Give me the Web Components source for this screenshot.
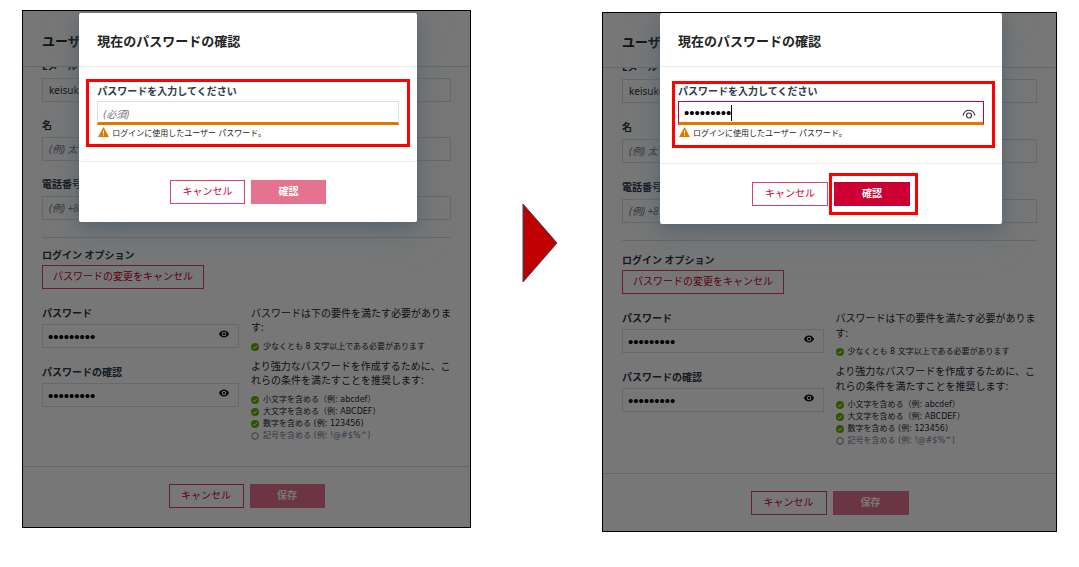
<!DOCTYPE html>
<html lang="ja">
<head>
<meta charset="utf-8">
<title>現在のパスワードの確認</title>
<style>
body { margin: 0; background: #fff; font-family: "Noto Sans", "Noto Sans CJK JP", sans-serif; font-size: 10px; color: #1f2a33; }
</style>
</head>
<body>
<password-steps></password-steps>
<script>
const define = (name, html, setup) => {
  const template = document.createElement('template');
  template.innerHTML = '<style>*{box-sizing:border-box}</style>' + html;
  customElements.define(name, class extends HTMLElement {
    constructor() {
      super();
      this.attachShadow({ mode: 'open' }).append(template.content.cloneNode(true));
    }
    connectedCallback() { if (setup) setup(this, this.shadowRoot); }
  });
};

define('ui-button', `
<style>
:host { display: inline-block; }
button { display: block; width: 100%; min-width: var(--button-width, 75px); height: 24px; padding: 0 10px 2px; margin: 0; border: 1px solid #d9436a; border-radius: 0; background: #fff; color: #cc0033; font: inherit; line-height: 20px; white-space: nowrap; }
:host([kind="primary"]) button { background: #cc0033; border-color: #cc0033; color: #fff; font-weight: 700; }
:host([kind="muted"]) button { background: #e5738f; border-color: #e5738f; color: #fff; font-weight: 700; }
</style>
<button type="button"><slot></slot></button>`);

define('eye-icon', `
<style>
:host { display: block; width: 10px; height: 8px; color: #10161b; }
:host([outline]) { width: 14px; height: 10px; color: #333; }
svg { display: none; width: 100%; height: 100%; }
:host(:not([outline])) .solid, :host([outline]) .line { display: block; }
</style>
<svg class="solid" viewBox="0 0 20 16"><path fill="currentColor" fill-rule="evenodd" d="M10 1C5 1 1.500 4 0 8c1.500 4 5 7 10 7s8.500-3 10-7c-1.500-4-5-7-10-7Zm0 2.500a4.500 4.500 0 1 1 0 9 4.500 4.500 0 0 1 0-9Z"/><circle cx="10" cy="8" r="2.600" fill="currentColor"/></svg>
<svg class="line" viewBox="0 0 28 20" fill="none" stroke="currentColor" stroke-width="2.200"><path d="M2 13C4 6 8.500 2.500 14 2.500S24 6 26 13"/><circle cx="14" cy="13" r="5"/></svg>`);

define('form-field', `
<style>
:host { display: block; }
label { display: block; font-weight: 700; line-height: 16px; white-space: nowrap; color: #2b3947; }
.box { position: relative; margin-top: var(--label-gap, 4px); }
input { display: block; width: 100%; height: 24px; margin: 0; padding: 0 6px; border: 1px solid #d9e0e6; border-radius: 0; background: #fff; color: #1f2a33; font: inherit; outline: none; }
input[type="password"] { padding: 0 5px; color: #000; font-family: "Liberation Sans", sans-serif; font-size: 15px; }
input[type="password"]::placeholder { font-family: "Noto Sans", "Noto Sans CJK JP", sans-serif; font-size: 10px; }
input::placeholder { color: #6b7884; opacity: 1; font-style: italic; }
eye-icon { position: absolute; right: 10px; top: 6px; }
eye-icon[outline] { right: 8px; top: 8px; }
:host([warn]) input { border-bottom: 3px solid #e07800; }
:host([active]) input { border-color: #cc0033 #cc0033 #e07800; }
.caret { position: absolute; left: 53px; top: 4px; width: 1px; height: 16px; background: #000; }
[hidden] { display: none; }
</style>
<label for="control"></label>
<div class="box"><input id="control"><span class="caret" hidden></span><eye-icon hidden></eye-icon></div>
<slot></slot>`, (host, root) => {
  const input = root.querySelector('input');
  root.querySelector('label').textContent = host.getAttribute('label');
  input.type = host.getAttribute('type') || 'text';
  input.value = host.getAttribute('value') || '';
  input.placeholder = host.getAttribute('placeholder') || '';
  root.querySelector('.caret').hidden = !host.hasAttribute('active');
  const eye = root.querySelector('eye-icon');
  eye.hidden = !host.hasAttribute('eye');
  eye.toggleAttribute('outline', host.getAttribute('eye') === 'outline');
});

define('rule-item', `
<style>
:host { display: flex; align-items: center; gap: 4px; line-height: 12px; font-family: "DejaVu Sans", "Noto Sans CJK JP", sans-serif; font-size: 8px; white-space: nowrap; }
:host([pending]) { color: #6b8093; }
svg { width: 8px; height: 8px; flex: none; }
.off, :host([pending]) .on { display: none; }
:host([pending]) .off { display: block; }
</style>
<svg class="on" viewBox="0 0 16 16"><circle cx="8" cy="8" r="8" fill="#66b000"/><path d="m4 8 3 3 5-6" fill="none" stroke="#fff" stroke-width="2"/></svg>
<svg class="off" viewBox="0 0 16 16"><circle cx="8" cy="8" r="6.500" fill="none" stroke="#6b8093" stroke-width="2"/></svg>
<span><slot></slot></span>`);

define('user-form', `
<style>
:host { display: block; }
header { height: var(--head); display: flex; align-items: center; padding: 3px 19px 0; }
h1 { margin: 0; font-size: 13px; font-weight: 700; }
main { border-top: 1px solid #d9e0e6; border-bottom: 1px solid #d9e0e6; padding: 0 19px var(--end); overflow: hidden; }
.fields { display: grid; gap: var(--gap); margin-top: -9px; }
.options { margin-top: 17px; padding-top: var(--option-gap); border-top: 1px solid #d9e0e6; }
h2 { margin: 0 0 2px; font-size: 10px; line-height: 16px; font-weight: 700; color: #2b3947; }
.passwords { display: grid; grid-template-columns: 1fr minmax(200px, 1fr); gap: 12px; margin-top: 16px; --label-gap: 3px; }
.pair { display: grid; gap: 16px; align-content: start; }
.rules { padding-top: 1px; }
p { margin: 0 0 var(--rule-gap); line-height: var(--line); }
rule-item + p { margin-top: 6px; }
footer { display: flex; justify-content: center; gap: 6px; padding: 17px 0 var(--foot); }
</style>
<header><h1>ユーザ</h1></header>
<main>
  <div class="fields">
    <form-field label="Eメール" value="keisuke"></form-field>
    <form-field label="名" placeholder="(例) 太"></form-field>
    <form-field label="電話番号" placeholder="(例) +8"></form-field>
  </div>
  <section class="options">
    <h2>ログイン オプション</h2>
    <ui-button>パスワードの変更をキャンセル</ui-button>
    <div class="passwords">
      <div class="pair">
        <form-field label="パスワード" type="password" value="password1" eye="solid"></form-field>
        <form-field label="パスワードの確認" type="password" value="password1" eye="solid"></form-field>
      </div>
      <div class="rules">
        <p>パスワードは下の要件を満たす必要があります:</p>
        <rule-item>少なくとも 8 文字以上である必要があります</rule-item>
        <p>より強力なパスワードを作成するために、これらの条件を満たすことを推奨します:</p>
        <rule-item>小文字を含める（例: abcdef）</rule-item>
        <rule-item>大文字を含める（例: ABCDEF）</rule-item>
        <rule-item>数字を含める (例: 123456)</rule-item>
        <rule-item pending>記号を含める (例: !@#$%^)</rule-item>
      </div>
    </div>
  </section>
</main>
<footer><ui-button>キャンセル</ui-button><ui-button kind="muted">保存</ui-button></footer>`);

define('red-mark', `
<style>
:host { display: block; position: relative; }
i { position: absolute; inset: var(--mark-inset); border: 3px solid #f00; pointer-events: none; }
</style>
<slot></slot><i></i>`);

define('confirm-dialog', `
<style>
:host { display: block; background: #fff; border-radius: 2px; box-shadow: 0 6px 18px rgba(60, 80, 95, .5), 0 12px 40px rgba(100, 120, 135, .25); }
header { display: flex; align-items: center; height: 53px; padding: 2px 18px 0; }
h1 { margin: 0; font-size: 13px; font-weight: 700; color: #222; }
main { padding: 16px 18px var(--dialog-end); border: solid #e8ecef; border-width: 1px 0; }
footer { display: flex; justify-content: center; gap: 6px; padding: 18px 0; }
</style>
<header><h1>現在のパスワードの確認</h1></header>
<main><slot></slot></main>
<footer><slot name="actions"></slot></footer>`);

define('warning-note', `
<style>
:host { display: flex; align-items: center; gap: 3px; height: 14px; padding-left: 1px; font-size: 8px; color: #222; white-space: nowrap; }
svg { width: 11px; height: 10px; flex: none; }
</style>
<svg viewBox="0 0 22 20"><path d="M11 0 22 20H0Z" fill="#e07800"/><path d="M11 7v6M11 15v2" stroke="#fff" stroke-width="2"/></svg>
<span><slot></slot></span>`);

define('screen-panel', `
<style>
:host { display: block; position: relative; border: 1px solid #000; background: #fff; }
.overlay { position: absolute; inset: 0; display: flex; justify-content: center; align-items: flex-start; padding: var(--drop) 0 0 3px; background: rgba(0, 0, 0, .535); overflow: hidden; }
::slotted(*) { width: 76%; }
</style>
<user-form></user-form>
<div class="overlay"><slot></slot></div>`);

define('step-arrow', `
<style>
:host { display: block; padding: 192px 0 0 6px; }
svg { display: block; width: 36px; height: 82px; margin: 0 auto; }
</style>
<svg viewBox="0 0 36 82" aria-hidden="true"><path d="M1 2 35 41 1 80Z" fill="#c00000" stroke="#2f4a66"/></svg>`);

define('password-steps', `
<style>
:host { display: grid; grid-template-columns: 449fr 131px 455fr; align-items: start; padding: 10px 22px; }
.before { --head: 55px; --gap: 15px; --option-gap: 9px; --line: 14px; --rule-gap: 7px; --end: 24px; --foot: 19px; --dialog-end: 22px; --drop: 2px; --button-width: 75px; }
.after { margin-top: 2px; --head: 54px; --gap: 16px; --option-gap: 11px; --line: 15px; --rule-gap: 5px; --end: 26px; --foot: 16px; --dialog-end: 24px; --drop: 0px; --button-width: 76px; }
red-mark { --mark-inset: -4px -11px -8px; }
.after red-mark { --mark-inset: -2px -11px -9px -6px; }
.after red-mark[slot] { --mark-inset: -9px -8px -9px -5px; }
form-field { --label-gap: 2px; }
</style>
<screen-panel class="before">
  <confirm-dialog>
    <red-mark><form-field warn label="パスワードを入力してください" type="password" placeholder="(必須)"><warning-note>ログインに使用したユーザー パスワード。</warning-note></form-field></red-mark>
    <ui-button slot="actions">キャンセル</ui-button>
    <ui-button slot="actions" kind="muted">確認</ui-button>
  </confirm-dialog>
</screen-panel>
<step-arrow></step-arrow>
<screen-panel class="after">
  <confirm-dialog>
    <red-mark><form-field warn active label="パスワードを入力してください" type="password" value="password1" eye="outline"><warning-note>ログインに使用したユーザー パスワード。</warning-note></form-field></red-mark>
    <ui-button slot="actions">キャンセル</ui-button>
    <red-mark slot="actions"><ui-button kind="primary">確認</ui-button></red-mark>
  </confirm-dialog>
</screen-panel>`);
</script>
</body>
</html>
